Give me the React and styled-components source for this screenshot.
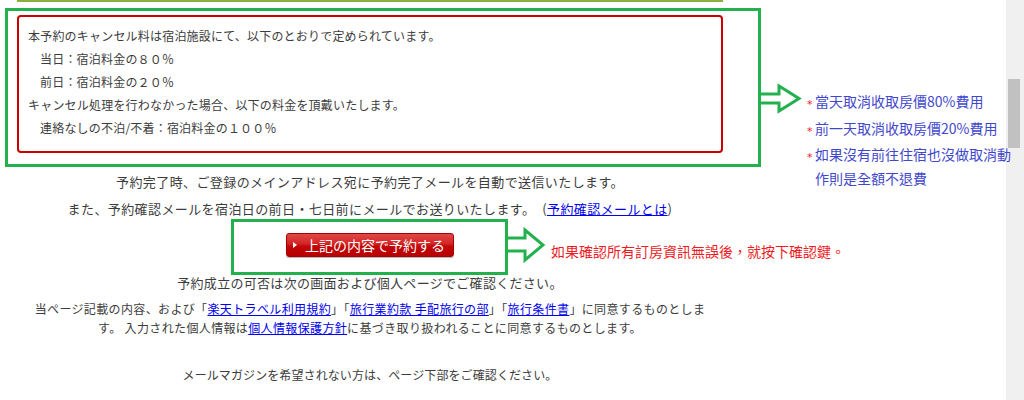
import React from 'react';
import styled, { createGlobalStyle } from 'styled-components';

const GlobalStyle = createGlobalStyle`
  html, body { margin: 0; padding: 0; background: #fff; }
  body {
    font-family: "Noto Sans CJK JP", "Noto Sans", sans-serif;
    color: #3c3c3c;
    overflow: hidden;
  }
`;

const Page = styled.div`
  display: flex;
  width: 1024px;
  height: 400px;
  overflow: hidden;
`;

const Main = styled.main`
  position: relative;
  flex: 1;
  min-width: 0;
`;

const Column = styled.div`
  width: 706px;
  margin-left: 17px;
  display: flex;
  flex-direction: column;
`;

const TopRule = styled.div`
  height: 2px;
  background: #8cb040;
`;

const NoticeBox = styled.div`
  margin-top: 13px;
  height: 138px;
  box-sizing: border-box;
  border: 2px solid #cc0000;
  border-radius: 4px;
  padding: 7px 9px 0;
  font-size: 12px;
  letter-spacing: 0.2px;
  line-height: 23px;
  color: #3c3c3c;
`;

const NoticeRow = styled.div`
  padding-left: ${p => (p.$indent ? 12 : 0)}px;
  white-space: nowrap;
`;

const Line = styled.p`
  margin: ${p => p.$gap}px 0 0;
  text-align: center;
  font-size: ${p => p.$size}px;
  letter-spacing: ${p => p.$track}px;
  line-height: ${p => p.$lh}px;
  color: #3c3c3c;
  white-space: nowrap;
`;

const Link = styled.a`
  color: #0000ee;
  text-decoration: underline;
  text-underline-offset: 1px;
  cursor: pointer;
`;

const ButtonRow = styled.div`
  margin-top: 14px;
  display: flex;
  justify-content: center;
`;

const ReserveButton = styled.button`
  display: flex;
  align-items: center;
  gap: 8px;
  width: 168px;
  height: 24px;
  box-sizing: border-box;
  padding: 0 0 0 6px;
  border: 1px solid #a30000;
  border-radius: 3px;
  background: linear-gradient(to bottom, #e04848 0%, #d42525 45%, #c20808 55%, #b80000 100%);
  box-shadow: 0 1px 1px rgba(0, 0, 0, 0.3);
  color: #fff;
  font-family: "Noto Sans CJK JP", sans-serif;
  font-size: 14px;
  line-height: 22px;
  letter-spacing: 0;
  cursor: pointer;

  &::before {
    content: "";
    width: 0;
    height: 0;
    border-left: 4px solid #fff;
    border-top: 3px solid transparent;
    border-bottom: 3px solid transparent;
  }
`;

const Frame = styled.div`
  position: absolute;
  left: ${p => p.$x}px;
  top: ${p => p.$y}px;
  width: ${p => p.$w}px;
  height: ${p => p.$h}px;
  box-sizing: border-box;
  border: 3px solid #22b14c;
  pointer-events: none;
`;

const ArrowSvg = styled.svg`
  position: absolute;
  left: ${p => p.$x}px;
  top: ${p => p.$y}px;
  overflow: visible;
`;

const NoteList = styled.div`
  position: absolute;
  left: 806px;
  top: 90px;
  display: flex;
  flex-direction: column;
  font-family: "Noto Sans CJK TC", "Noto Sans CJK JP", sans-serif;
  font-size: 14px;
  line-height: 23.5px;
  color: #3f48cc;
`;

const NoteItem = styled.div`
  display: flex;
  align-items: flex-start;
`;

const Star = styled.span`
  width: 9px;
  flex: none;
  color: #ed1c24;
  font-family: "DejaVu Sans", sans-serif;
  font-size: 11px;
  line-height: 23.5px;
  padding-top: 3px;
  padding-left: 1px;
  box-sizing: border-box;
`;

const NoteText = styled.span`
  width: 200px;
`;

const RedNote = styled.div`
  position: absolute;
  left: 551px;
  top: 241px;
  font-family: "Noto Sans CJK TC", "Noto Sans CJK JP", sans-serif;
  font-size: 14px;
  line-height: 20px;
  color: #ed1c24;
  white-space: nowrap;
`;

const Scrollbar = styled.div`
  width: 18px;
  flex: none;
  background: #f0f0f0;
`;

const Thumb = styled.div`
  margin: 79px 0 0 2px;
  width: 12px;
  height: 69px;
  background: #c1c1c1;
`;

function Arrow({ x, y, shaftTop, shaftBottom, base, headTop, headBottom, tip }) {
  const mid = (headTop + headBottom) / 2;
  const pts = [
    [0, shaftTop],
    [base, shaftTop],
    [base, headTop],
    [tip, mid],
    [base, headBottom],
    [base, shaftBottom],
    [0, shaftBottom],
  ]
    .map(p => p.join(','))
    .join(' ');
  return (
    <ArrowSvg $x={x} $y={y} width={tip + 2} height={headBottom + 2}>
      <polyline points={pts} fill="none" stroke="#22b14c" strokeWidth="3" strokeLinejoin="miter" />
    </ArrowSvg>
  );
}

export default function App() {
  return (
    <>
      <GlobalStyle />
      <Page>
        <Main>
          <Column>
            <TopRule />
            <NoticeBox>
              <NoticeRow>本予約のキャンセル料は宿泊施設にて、以下のとおりで定められています。</NoticeRow>
              <NoticeRow $indent>当日：宿泊料金の８０％</NoticeRow>
              <NoticeRow $indent>前日：宿泊料金の２０％</NoticeRow>
              <NoticeRow>キャンセル処理を行わなかった場合、以下の料金を頂戴いたします。</NoticeRow>
              <NoticeRow $indent>連絡なしの不泊/不着：宿泊料金の１００％</NoticeRow>
            </NoticeBox>

            <Line $gap={19} $size={13} $track={0.4} $lh={20}>
              予約完了時、ご登録のメインアドレス宛に予約完了メールを自動で送信いたします。
            </Line>
            <Line $gap={7} $size={13} $track={0.4} $lh={20}>
              また、予約確認メールを宿泊日の前日・七日前にメールでお送りいたします。　(<Link>予約確認メールとは</Link>)
            </Line>

            <ButtonRow>
              <ReserveButton type="button">上記の内容で予約する</ReserveButton>
            </ButtonRow>

            <Line $gap={16} $size={13} $track={0.3} $lh={20}>
              予約成立の可否は次の画面および個人ページでご確認ください。
            </Line>
            <Line $gap={6} $size={12} $track={0.36} $lh={19}>
              当ページ記載の内容、および「<Link>楽天トラベル利用規約</Link>」「<Link>旅行業約款 手配旅行の部</Link>」「<Link>旅行条件書</Link>」に同意するものとしま
              <br />
              す。 入力された個人情報は<Link>個人情報保護方針</Link>に基づき取り扱われることに同意するものとします。
            </Line>
            <Line $gap={28} $size={12} $track={0.1} $lh={20}>
              メールマガジンを希望されない方は、ページ下部をご確認ください。
            </Line>
          </Column>

          <Frame $x={5} $y={8} $w={756} $h={159} />
          <Arrow x={759} y={84} shaftTop={10} shaftBottom={19} base={20} headTop={2} headBottom={27} tip={40} />
          <NoteList>
            <NoteItem>
              <Star>*</Star>
              <NoteText>當天取消收取房價80%費用</NoteText>
            </NoteItem>
            <NoteItem>
              <Star>*</Star>
              <NoteText>前一天取消收取房價20%費用</NoteText>
            </NoteItem>
            <NoteItem>
              <Star>*</Star>
              <NoteText>如果沒有前往住宿也沒做取消動作則是全額不退費</NoteText>
            </NoteItem>
          </NoteList>

          <Frame $x={231} $y={219} $w={277} $h={56} />
          <Arrow x={506} y={228} shaftTop={10} shaftBottom={23} base={19} headTop={2} headBottom={32} tip={37} />
          <RedNote>如果確認所有訂房資訊無誤後，就按下確認鍵。</RedNote>
        </Main>
        <Scrollbar>
          <Thumb />
        </Scrollbar>
      </Page>
    </>
  );
}
